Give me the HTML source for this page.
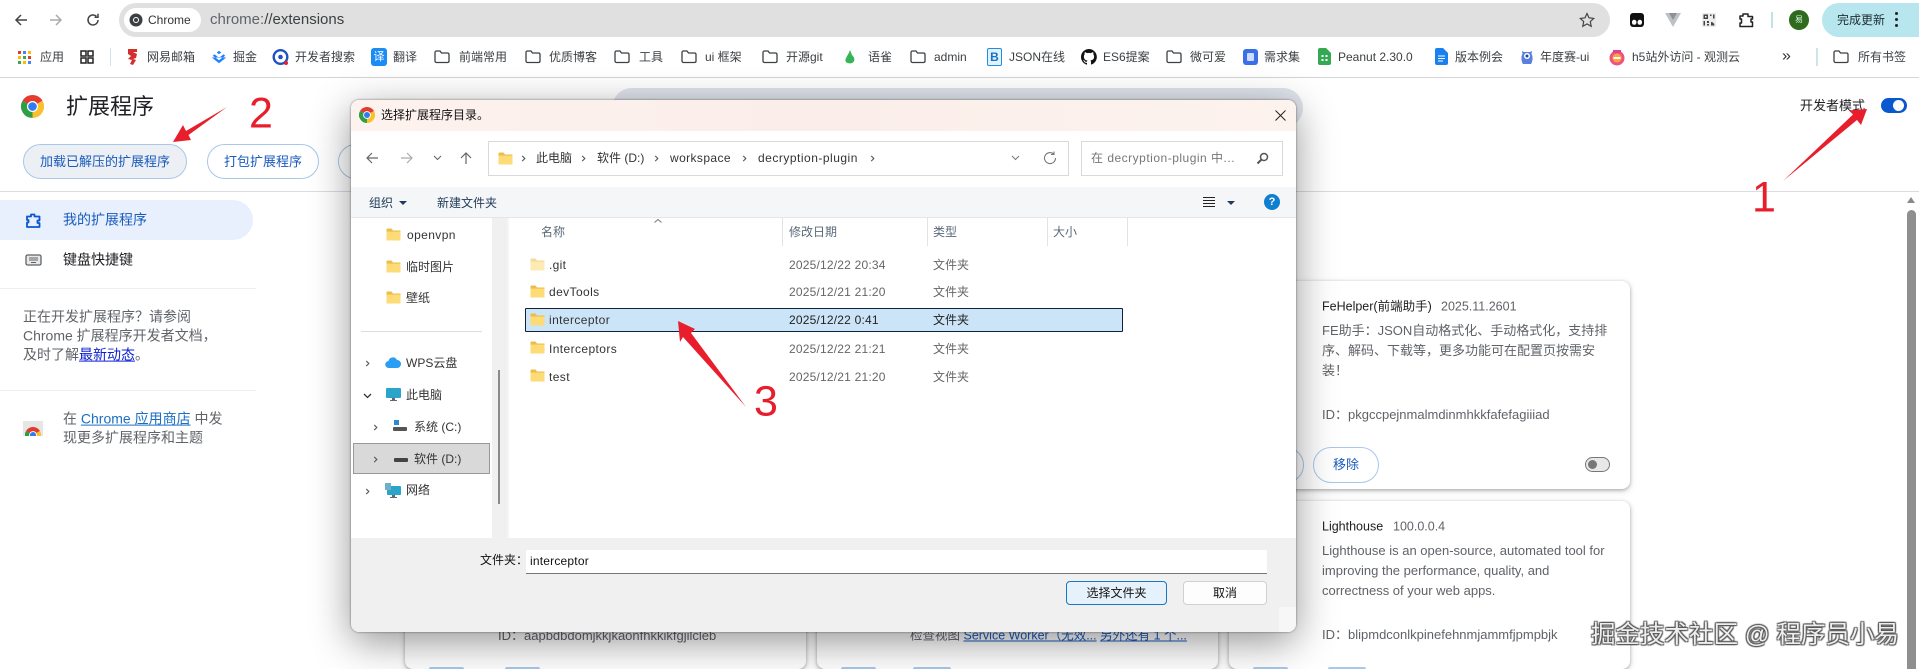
<!DOCTYPE html>
<html lang="zh-CN"><head><meta charset="utf-8"><title>扩展程序</title>
<style>
html,body{margin:0;padding:0;width:1919px;height:669px;overflow:hidden;background:#fff}
body{position:relative;font-family:"Liberation Sans","Noto Sans CJK SC",sans-serif;color:#3c4043}
.t{position:absolute;white-space:nowrap;line-height:1.2;transform:translateY(-50%)}
.a{position:absolute}
svg{display:block}
.i{position:absolute;overflow:visible}
.bm{font-size:12px;color:#3c4043}
.card{position:absolute;background:#fff;border-radius:8px;box-shadow:0 1px 3px rgba(60,64,67,.35),0 2px 7px rgba(60,64,67,.2)}
.pb{position:absolute;border:1px solid #a8c7ea;border-radius:18px;background:#fff;color:#1a5bbd;font-size:13px;box-sizing:border-box;text-align:center;line-height:33px}
.pe{position:absolute;top:667px;height:2px;background:#a8c7ea;border-radius:2px 2px 0 0}
.d12{font-size:12px;color:#333}
.gr{color:#5f6368}
.cd{font-size:13px;color:#5f6368}
.cn{font-size:12.5px;color:#202124}
.num{position:absolute;font-family:"Liberation Sans",sans-serif;color:#e81e2d;font-size:43px;line-height:1;transform:translateY(-50%)}
</style></head><body>
<svg width="0" height="0" style="position:absolute"><defs>
<symbol id="chrome" viewBox="0 0 24 24"><path d="M12 12L1.6 6A12 12 0 0 1 22.4 6Z" fill="#e33b2e"/><path d="M12 12L22.4 6A12 12 0 0 1 12 24Z" fill="#fbc02d"/><path d="M12 12L12 24A12 12 0 0 1 1.6 6Z" fill="#2f9e44"/><circle cx="12" cy="12" r="5.8" fill="#fff"/><circle cx="12" cy="12" r="4.5" fill="#2f7cf0"/></symbol>
<symbol id="fold" viewBox="0 0 14 13"><path d="M0 1.500C0 .8.500.5 1 .5h4l1.500 2H14V12H0Z" fill="#eebc48"/><path d="M0 3.600h14V12.500H0Z" fill="#fddb76"/></symbol>
<symbol id="bf" viewBox="0 0 16 14"><path d="M1 2.500C1 1.600 1.600 1 2.500 1h3.500l1.500 2h6c.9 0 1.500.6 1.500 1.500v6.500c0 .9-.6 1.500-1.500 1.500h-11c-.9 0-1.500-.6-1.500-1.500Z" fill="none" stroke="#3c4043" stroke-width="1.300"/></symbol>
<symbol id="chev" viewBox="0 0 8 10"><path d="M2.500 2l3 3-3 3" fill="none" stroke="#555" stroke-width="1.300"/></symbol>
</defs></svg>

<!-- page content under dialog -->
<div class="a" style="left:612px;top:88px;width:691px;height:40px;border-radius:20px;background:#dfe3eb"></div>
<div class="a" style="left:0;top:191px;width:1919px;height:1px;background:#dadce0"></div>
<svg class="i" style="left:21px;top:95px" width="23" height="23"><use href="#chrome"/></svg>
<div class="t" style="left:66px;top:107px;font-size:22px;color:#202124">扩展程序</div>
<div class="pb" style="left:23px;top:144px;width:164px;height:35px;background:#eceff3">加载已解压的扩展程序</div>
<div class="pb" style="left:207px;top:144px;width:112px;height:35px">打包扩展程序</div>
<div class="pb" style="left:338px;top:144px;width:112px;height:35px"></div>
<div class="t" style="left:1800px;top:106px;font-size:13px;color:#202124">开发者模式</div>
<div class="a" style="left:1881px;top:98px;width:26px;height:15px;border-radius:8px;background:#0b57d0"></div>
<div class="a" style="left:1893px;top:100px;width:11px;height:11px;border-radius:50%;background:#fff"></div>

<div class="a" style="left:0;top:200px;width:253px;height:40px;border-radius:0 20px 20px 0;background:#e8f0fe"></div>
<svg class="i" style="left:25px;top:212px" width="17" height="17" viewBox="0 0 17 17"><path d="M6 2.500h3.500v2h5v4h-2v2.500h2v4H2v-4.500h1.500V8H2V4.500h4Z" fill="none" stroke="#0b57d0" stroke-width="1.800" stroke-linejoin="round"/></svg>
<div class="t" style="left:63px;top:220px;font-size:14px;color:#1a5bbd">我的扩展程序</div>
<svg class="i" style="left:25px;top:253px" width="17" height="14" viewBox="0 0 17 14"><rect x="1" y="2" width="15" height="10" rx="1.500" fill="#e8e8e8" stroke="#5f6368" stroke-width="1.300"/><path d="M4 5h9M4 7h9M6 9.500h5" stroke="#5f6368"/></svg>
<div class="t" style="left:63px;top:260px;font-size:14px;color:#202124">键盘快捷键</div>
<div class="a" style="left:0;top:288px;width:256px;height:1px;background:#eceef0"></div>
<div class="t gr" style="left:23px;top:317px;font-size:14px">正在开发扩展程序&#xFF1F;请参阅</div>
<div class="t gr" style="left:23px;top:336px;font-size:14px">Chrome 扩展程序开发者文档&#xFF0C;</div>
<div class="t gr" style="left:23px;top:355px;font-size:14px">及时了解<span style="color:#0b1fd0;text-decoration:underline">最新动态</span>。</div>
<div class="a" style="left:0;top:390px;width:256px;height:1px;background:#eceef0"></div>
<div class="a" style="left:23px;top:421px;width:20px;height:15px;background:#e6e6e6;overflow:hidden"><svg class="i" style="left:2px;top:6px;clip-path:inset(0 0 7px 0)" width="16" height="16"><use href="#chrome"/></svg></div>
<div class="t gr" style="left:63px;top:419px;font-size:14px">在 <span style="color:#1a6fc4;text-decoration:underline">Chrome 应用商店</span> 中发</div>
<div class="t gr" style="left:63px;top:438px;font-size:14px">现更多扩展程序和主题</div>

<!-- cards -->
<div class="card" style="left:1229px;top:281px;width:401px;height:208px"></div>
<div class="card" style="left:1229px;top:501px;width:401px;height:168px"></div>
<div class="card" style="left:405px;top:501px;width:401px;height:168px"></div>
<div class="card" style="left:817px;top:501px;width:401px;height:168px"></div>

<div class="t cn" style="left:1322px;top:307px">FeHelper(前端助手)</div>
<div class="t cn" style="left:1441px;top:307px;color:#5f6368">2025.11.2601</div>
<div class="t cd" style="left:1322px;top:331px">FE助手&#xFF1A;JSON自动格式化、手动格式化&#xFF0C;支持排</div>
<div class="t cd" style="left:1322px;top:351px">序、解码、下载等&#xFF0C;更多功能可在配置页按需安</div>
<div class="t cd" style="left:1322px;top:371px">装&#xFF01;</div>
<div class="t cd" style="left:1322px;top:415px">ID&#xFF1A;pkgccpejnmalmdinmhkkfafefagiiiad</div>
<div class="pb" style="left:1240px;top:447px;width:64px;height:36px"></div>
<div class="pb" style="left:1313px;top:447px;width:66px;height:36px;line-height:34px;font-size:13px">移除</div>
<div class="a" style="left:1585px;top:457px;width:25px;height:15px;border:1px solid #777;border-radius:8px;background:#e8e8e8;box-sizing:border-box"></div>
<div class="a" style="left:1588px;top:460px;width:9px;height:9px;border-radius:50%;background:#777"></div>

<div class="t cn" style="left:1322px;top:527px">Lighthouse</div>
<div class="t cn" style="left:1393px;top:527px;color:#5f6368">100.0.0.4</div>
<div class="t cd" style="left:1322px;top:551px">Lighthouse is an open-source, automated tool for</div>
<div class="t cd" style="left:1322px;top:571px">improving the performance, quality, and</div>
<div class="t cd" style="left:1322px;top:591px">correctness of your web apps.</div>
<div class="t cd" style="left:1322px;top:635px">ID&#xFF1A;blipmdconlkpinefehnmjammfjpmpbjk</div>
<div class="t cd" style="left:498px;top:636px">ID&#xFF1A;aapbdbdomjkkjkaonfhkkikfgjilcleb</div>
<div class="t cd" style="left:910px;top:636px;font-size:12.5px">检查视图 <span style="color:#1a5bbd;text-decoration:underline">Service Worker&#xFF08;无效...</span> <span style="color:#1a5bbd;text-decoration:underline">另外还有 1 个...</span></div>
<div class="pe" style="left:429px;width:35px"></div>
<div class="pe" style="left:505px;width:35px"></div>
<div class="pe" style="left:841px;width:35px"></div>
<div class="pe" style="left:913px;width:38px"></div>
<div class="pe" style="left:1253px;width:35px"></div>
<div class="pe" style="left:1328px;width:38px"></div>

<!-- scrollbar -->
<div class="a" style="left:1907px;top:197px;width:0;height:0;border-left:4.500px solid transparent;border-right:4.500px solid transparent;border-bottom:6px solid #8a8a8a"></div>
<div class="a" style="left:1907px;top:210px;width:9px;height:459px;border-radius:5px 5px 0 0;background:#8f8f8f"></div>

<!-- top chrome -->
<div class="a" style="left:0;top:0;width:1919px;height:77px;background:#fff;border-bottom:1px solid #d4d4d4"></div>
<svg class="i" style="left:13px;top:12px" width="16" height="16" viewBox="0 0 16 16"><path d="M14 8H3M8 3L3 8l5 5" fill="none" stroke="#444" stroke-width="1.500"/></svg>
<svg class="i" style="left:48px;top:12px" width="16" height="16" viewBox="0 0 16 16"><path d="M2 8h11M8 3l5 5-5 5" fill="none" stroke="#aaa" stroke-width="1.500"/></svg>
<svg class="i" style="left:85px;top:12px" width="16" height="16" viewBox="0 0 16 16"><path d="M13 8a5 5 0 1 1-1.600-3.700M13 1.800v3.400H9.600" fill="none" stroke="#444" stroke-width="1.500"/></svg>
<div class="a" style="left:119px;top:3px;width:1491px;height:34px;border-radius:17px;background:#e0e0e0"></div>
<div class="a" style="left:124px;top:8px;width:77px;height:24px;border-radius:12px;background:#fff"></div>
<svg class="i" style="left:129px;top:13px" width="14" height="14" viewBox="0 0 14 14"><circle cx="7" cy="7" r="6.500" fill="#3c4043"/><circle cx="7" cy="7" r="3" fill="#fff"/><circle cx="7" cy="7" r="2" fill="#3c4043"/></svg>
<div class="t" style="left:148px;top:20px;font-size:12px;color:#333">Chrome</div>
<div class="t" style="left:210px;top:20px;font-size:15px;color:#5f6368">chrome:<span style="color:#3c4043">//extensions</span></div>
<svg class="i" style="left:1579px;top:12px" width="16" height="16" viewBox="0 0 16 16"><path d="M8 1.500l2 4.300 4.700.6-3.400 3.200.9 4.700L8 11.900l-4.200 2.400.9-4.700L1.300 6.400 6 5.800Z" fill="none" stroke="#444" stroke-width="1.200"/></svg>
<svg class="i" style="left:1630px;top:13px" width="14" height="14" viewBox="0 0 14 14"><path d="M3 0h8a3 3 0 0 1 3 3v8a3 3 0 0 1-3 3H3a3 3 0 0 1-3-3V3a3 3 0 0 1 3-3Z" fill="#111"/><ellipse cx="4.200" cy="9.300" rx="2.300" ry="2.500" fill="#fff"/><ellipse cx="9.800" cy="9.300" rx="2.300" ry="2.500" fill="#fff"/></svg>
<svg class="i" style="left:1665px;top:13px" width="16" height="14" viewBox="0 0 16 14"><path d="M0 0h16L8 14Z" fill="#bfc2c4"/><path d="M4 0h8L8 7Z" fill="#8d9195"/></svg>
<svg class="i" style="left:1702px;top:13px" width="14" height="14" viewBox="0 0 14 14"><rect width="14" height="14" fill="#ececec"/><path d="M1.500 1.500h4.500v4.500H1.500ZM8 1.500h1.500V3H8ZM11 1.500h1.500v4H11ZM1.500 8H3v4.500H1.500Z" fill="#444"/><path d="M3 3h1.500v1.500H3Z" fill="#fff"/><path d="M5 8h2v2H5ZM5 11h2v1.500H5ZM9 9a3.500 3.500 0 0 1 3.500 3.500H9Z" fill="#444"/></svg>
<svg class="i" style="left:1738px;top:12px" width="17" height="16" viewBox="0 0 17 16"><path d="M5 2h5v2.500h4.500V7H13v3h1.500v4.500H2V11h1.500V7H2V4h3Z" fill="none" stroke="#222" stroke-width="1.500" stroke-linejoin="round"/></svg>
<div class="a" style="left:1771px;top:12px;width:2px;height:16px;background:#bfe2e8"></div>
<div class="a" style="left:1789px;top:10px;width:20px;height:20px;border-radius:50%;background:#2f6a1d"></div>
<div class="t" style="left:1795px;top:20px;font-size:8px;color:#dfe">易</div>
<div class="a" style="left:1822px;top:3px;width:97px;height:34px;border-radius:17px 0 0 17px;background:#b7e6ee"></div>
<div class="t" style="left:1837px;top:20px;font-size:12px;color:#1f2d33">完成更新</div>
<div class="a" style="left:1895px;top:12px;width:3px;height:3px;border-radius:50%;background:#222;box-shadow:0 6px 0 #222,0 12px 0 #222"></div>

<!-- bookmarks -->
<svg class="i" style="left:17px;top:50px" width="15" height="14" viewBox="0 0 15 14"><path d="M1 1h3v3H1Z" fill="#e33b2e"/><path d="M6 1h3v3H6Z" fill="#4285f4"/><path d="M11 1h3v3h-3Z" fill="#fbbc05"/><path d="M1 6h3v3H1Z" fill="#fbbc05"/><path d="M6 6h3v3H6Z" fill="#34a853"/><path d="M11 6h3v3h-3Z" fill="#e33b2e"/><path d="M1 11h3v3H1Z" fill="#34a853"/><path d="M6 11h3v3H6Z" fill="#fbbc05"/><path d="M11 11h3v3h-3Z" fill="#4285f4"/></svg>
<div class="t bm" style="left:40px;top:57px">应用</div>
<svg class="i" style="left:80px;top:50px" width="14" height="14" viewBox="0 0 14 14"><path d="M1 1h5v5H1ZM8 1h5v5H8ZM1 8h5v5H1ZM8 8h5v5H8Z" fill="none" stroke="#222" stroke-width="1.500"/></svg>
<div class="a" style="left:110px;top:48px;width:1px;height:18px;background:#cfe3ea"></div>
<svg class="i" style="left:126px;top:48px" width="13" height="18" viewBox="0 0 13 18"><path d="M2 1h9v3H7l4 2-1 4-3 1 3 1-3 5-3-1 2-4-4-1 3-3-3-2Z" fill="#d32f2f"/></svg>
<div class="t bm" style="left:147px;top:57px">网易邮箱</div>
<svg class="i" style="left:211px;top:50px" width="16" height="14" viewBox="0 0 16 14"><path d="M8 1l2 1.500L8 4 6 2.500ZM3.500 4.500L8 8l4.500-3.500 1.500 1.200L8 10.500 2 5.700ZM1 7.500L8 13l7-5.500" fill="#1e80ff" stroke="#1e80ff" stroke-width=".4"/></svg>
<div class="t bm" style="left:233px;top:57px">掘金</div>
<svg class="i" style="left:272px;top:48px" width="17" height="18" viewBox="0 0 17 18"><circle cx="8.500" cy="9" r="6.800" fill="none" stroke="#1d52c4" stroke-width="2.400"/><circle cx="8.500" cy="9" r="2.300" fill="#1d52c4"/><circle cx="14" cy="15" r="2" fill="#e3222e"/></svg>
<div class="t bm" style="left:295px;top:57px">开发者搜索</div>
<div class="a" style="left:371px;top:48px;width:16px;height:18px;border-radius:3px;background:#1b8bf5;color:#fff;font-size:11px;line-height:18px;text-align:center">译</div>
<div class="t bm" style="left:393px;top:57px">翻译</div>
<svg class="i" style="left:434px;top:50px" width="16" height="14"><use href="#bf"/></svg><div class="t bm" style="left:459px;top:57px">前端常用</div>
<svg class="i" style="left:525px;top:50px" width="16" height="14"><use href="#bf"/></svg><div class="t bm" style="left:549px;top:57px">优质博客</div>
<svg class="i" style="left:614px;top:50px" width="16" height="14"><use href="#bf"/></svg><div class="t bm" style="left:639px;top:57px">工具</div>
<svg class="i" style="left:681px;top:50px" width="16" height="14"><use href="#bf"/></svg><div class="t bm" style="left:705px;top:57px">ui 框架</div>
<svg class="i" style="left:762px;top:50px" width="16" height="14"><use href="#bf"/></svg><div class="t bm" style="left:786px;top:57px">开源git</div>
<svg class="i" style="left:844px;top:49px" width="12" height="16" viewBox="0 0 12 16"><path d="M6 1c1 2 1 3 2 5 2 2 3 4 2 6-1 3-6 3-8 1C0 10 4 7 6 1Z" fill="#35b558"/></svg>
<div class="t bm" style="left:868px;top:57px">语雀</div>
<svg class="i" style="left:910px;top:50px" width="16" height="14"><use href="#bf"/></svg><div class="t bm" style="left:934px;top:57px">admin</div>
<div class="a" style="left:987px;top:48px;width:15px;height:18px;border-radius:2px;background:#e2f1fb;border:1px solid #1d8fe0;box-sizing:border-box;color:#1273c4;font-size:12px;font-weight:bold;line-height:16px;text-align:center">B</div>
<div class="t bm" style="left:1009px;top:57px">JSON在线</div>
<svg class="i" style="left:1081px;top:49px" width="16" height="16" viewBox="0 0 16 16"><path d="M8 0a8 8 0 0 0-2.500 15.600c.4.1.5-.2.5-.4v-1.400c-2.200.5-2.700-1-2.700-1-.4-.9-.9-1.200-.9-1.200-.7-.5.100-.5.100-.5.800.1 1.200.8 1.200.8.700 1.200 1.900.9 2.300.7.100-.5.300-.9.500-1.100-1.800-.2-3.600-.9-3.600-4 0-.9.300-1.600.8-2.100-.1-.2-.4-1 .1-2.100 0 0 .7-.2 2.200.8a7.500 7.500 0 0 1 4 0c1.500-1 2.200-.8 2.200-.8.400 1.100.2 1.900.1 2.100.5.600.8 1.300.8 2.100 0 3.100-1.900 3.700-3.700 3.900.3.300.6.700.6 1.500v2.200c0 .2.100.5.600.4A8 8 0 0 0 8 0Z" fill="#111"/></svg>
<div class="t bm" style="left:1103px;top:57px">ES6提案</div>
<svg class="i" style="left:1166px;top:50px" width="16" height="14"><use href="#bf"/></svg><div class="t bm" style="left:1190px;top:57px">微可爱</div>
<div class="a" style="left:1243px;top:49px;width:15px;height:16px;border-radius:3px;background:#3b6fe8"><div class="a" style="left:4px;top:4px;width:7px;height:8px;background:#cfdcff;border-radius:1px"></div></div>
<div class="t bm" style="left:1264px;top:57px">需求集</div>
<svg class="i" style="left:1318px;top:48px" width="13" height="17" viewBox="0 0 13 17"><path d="M2 0h6l5 5v10a2 2 0 0 1-2 2H2a2 2 0 0 1-2-2V2a2 2 0 0 1 2-2Z" fill="#34a853"/><path d="M3.500 7h2v2h-2ZM7.500 7h2v2h-2ZM3.500 11h2v2h-2ZM7.500 11h2v2h-2Z" fill="#fff"/></svg>
<div class="t bm" style="left:1338px;top:57px">Peanut 2.30.0</div>
<svg class="i" style="left:1435px;top:48px" width="13" height="17" viewBox="0 0 13 17"><path d="M2 0h6l5 5v10a2 2 0 0 1-2 2H2a2 2 0 0 1-2-2V2a2 2 0 0 1 2-2Z" fill="#1a80f0"/><path d="M3 8h7M3 10.500h7M3 13h5" stroke="#fff"/></svg>
<div class="t bm" style="left:1455px;top:57px">版本例会</div>
<svg class="i" style="left:1520px;top:48px" width="14" height="18" viewBox="0 0 14 18"><path d="M2 3l2 1h6l2-1-.5 3C13 8 13 13 11 16H3C1 13 1 8 2.500 6Z" fill="#5b7fe0"/><circle cx="7" cy="8" r="3" fill="#fff"/><circle cx="7" cy="8" r="1.500" fill="#27408b"/></svg>
<div class="t bm" style="left:1540px;top:57px">年度赛-ui</div>
<svg class="i" style="left:1609px;top:48px" width="16" height="18" viewBox="0 0 16 18"><circle cx="8" cy="10" r="7.500" fill="#f0527f"/><circle cx="8" cy="10" r="4.500" fill="#fba63c"/><path d="M4 2h8v3H4Z" fill="#e0418f"/><path d="M4.500 9h7v2h-7Z" fill="#fff"/></svg>
<div class="t bm" style="left:1632px;top:57px">h5站外访问 - 观测云</div>
<div class="t" style="left:1782px;top:56px;font-size:16px;color:#333">»</div>
<div class="a" style="left:1816px;top:48px;width:2px;height:18px;background:#cfe3ea"></div>
<svg class="i" style="left:1833px;top:50px" width="16" height="14"><use href="#bf"/></svg><div class="t bm" style="left:1858px;top:57px">所有书签</div>

<!-- dialog -->
<div class="a" style="left:351px;top:100px;width:945px;height:532px;border-radius:8px;background:#fff;box-shadow:0 10px 40px rgba(0,0,0,.42),0 0 2px rgba(0,0,0,.5);overflow:hidden">
 <div class="a" style="left:0;top:0;width:945px;height:31px;background:linear-gradient(90deg,#fdf2ee,#fbeeea 50%,#fdf3ee)"></div>
 <div class="a" style="left:0;top:87px;width:945px;height:31px;background:#f5f6f7;border-bottom:1px solid #e6e6e6;box-sizing:border-box"></div>
 <div class="a" style="left:141px;top:118px;width:15px;height:320px;background:#f0f0f0"></div>
 <div class="a" style="left:147px;top:270px;width:2px;height:134px;background:#8a8a8a"></div>
 <div class="a" style="left:156px;top:118px;width:2px;height:320px;background:#f5f5f5"></div>
 <div class="a" style="left:0;top:438px;width:945px;height:94px;background:#f0f0f0"></div>
 <div class="a" style="left:928px;top:507px;width:17px;height:25px;background:#f7f7f7"></div>
</div>
<svg class="i" style="left:359px;top:107px" width="16" height="16"><use href="#chrome"/></svg>
<div class="t" style="left:381px;top:115px;font-size:12px;color:#111">选择扩展程序目录。</div>
<svg class="i" style="left:1275px;top:110px" width="11" height="11" viewBox="0 0 11 11"><path d="M.5.500l10 10M10.500.500l-10 10" stroke="#222" stroke-width="1"/></svg>
<svg class="i" style="left:365px;top:151px" width="14" height="14" viewBox="0 0 14 14"><path d="M13 7H2M7 2L2 7l5 5" fill="none" stroke="#666" stroke-width="1.200"/></svg>
<svg class="i" style="left:400px;top:151px" width="14" height="14" viewBox="0 0 14 14"><path d="M1 7h11M7 2l5 5-5 5" fill="none" stroke="#aaa" stroke-width="1.200"/></svg>
<svg class="i" style="left:433px;top:155px" width="9" height="6" viewBox="0 0 9 6"><path d="M1 1l3.500 3.500L8 1" fill="none" stroke="#666" stroke-width="1.100"/></svg>
<svg class="i" style="left:459px;top:151px" width="14" height="14" viewBox="0 0 14 14"><path d="M7 13V2M2 7l5-5 5 5" fill="none" stroke="#666" stroke-width="1.200"/></svg>
<div class="a" style="left:488px;top:141px;width:581px;height:35px;border:1px solid #d9d9d9;box-sizing:border-box"></div>
<svg class="i" style="left:498px;top:152px" width="15" height="13"><use href="#fold"/></svg>
<svg class="i" style="left:520px;top:154px" width="7" height="9"><use href="#chev"/></svg>
<div class="t d12" style="left:536px;top:158px">此电脑</div>
<svg class="i" style="left:580px;top:154px" width="7" height="9"><use href="#chev"/></svg>
<div class="t d12" style="left:597px;top:158px">软件 (D:)</div>
<svg class="i" style="left:653px;top:154px" width="7" height="9"><use href="#chev"/></svg>
<div class="t d12" style="left:670px;top:158px;letter-spacing:.4px">workspace</div>
<svg class="i" style="left:741px;top:154px" width="7" height="9"><use href="#chev"/></svg>
<div class="t d12" style="left:758px;top:158px;letter-spacing:.5px">decryption-plugin</div>
<svg class="i" style="left:869px;top:154px" width="7" height="9"><use href="#chev"/></svg>
<svg class="i" style="left:1011px;top:155px" width="9" height="6" viewBox="0 0 9 6"><path d="M1 1l3.500 3.500L8 1" fill="none" stroke="#777" stroke-width="1"/></svg>
<svg class="i" style="left:1043px;top:151px" width="14" height="14" viewBox="0 0 14 14"><path d="M12.500 7a5.500 5.500 0 1 1-1.800-4M11 .5v3H8" fill="none" stroke="#777" stroke-width="1.100"/></svg>
<div class="a" style="left:1081px;top:141px;width:202px;height:35px;border:1px solid #d9d9d9;box-sizing:border-box"></div>
<div class="t" style="left:1091px;top:158px;font-size:12px;color:#777;letter-spacing:.5px">在 decryption-plugin 中...</div>
<svg class="i" style="left:1256px;top:152px" width="13" height="13" viewBox="0 0 13 13"><circle cx="8" cy="5" r="3.500" fill="none" stroke="#555" stroke-width="1.500"/><path d="M5.500 7.500L1.500 11.500" stroke="#555" stroke-width="2"/></svg>

<div class="t d12" style="left:369px;top:203px;color:#1f3a5a">组织</div>
<div class="a" style="left:399px;top:201px;width:0;height:0;border-left:4px solid transparent;border-right:4px solid transparent;border-top:4px solid #1f3a5a"></div>
<div class="t d12" style="left:437px;top:203px;color:#1f3a5a">新建文件夹</div>
<svg class="i" style="left:1203px;top:197px" width="12" height="11" viewBox="0 0 12 11"><path d="M0 .5h12M0 3.500h12M0 6.500h12M0 9.500h12" stroke="#222"/></svg>
<div class="a" style="left:1227px;top:201px;width:0;height:0;border-left:4px solid transparent;border-right:4px solid transparent;border-top:4px solid #1f3a5a"></div>
<div class="a" style="left:1264px;top:194px;width:16px;height:16px;border-radius:50%;background:#0f7fd0;color:#fff;font-size:11px;font-weight:bold;line-height:16px;text-align:center">?</div>

<!-- tree -->
<svg class="i" style="left:386px;top:228px" width="15" height="13"><use href="#fold"/></svg>
<div class="t d12" style="left:407px;top:235px;letter-spacing:.4px">openvpn</div>
<svg class="i" style="left:386px;top:260px" width="15" height="13"><use href="#fold"/></svg>
<div class="t d12" style="left:406px;top:267px">临时图片</div>
<svg class="i" style="left:386px;top:291px" width="15" height="13"><use href="#fold"/></svg>
<div class="t d12" style="left:406px;top:298px">壁纸</div>
<div class="a" style="left:361px;top:331px;width:121px;height:1px;background:#ddd"></div>
<svg class="i" style="left:364px;top:359px" width="7" height="9"><use href="#chev"/></svg>
<svg class="i" style="left:385px;top:356px" width="16" height="13" viewBox="0 0 16 13"><path d="M4 12a3.500 3.500 0 0 1-.5-7A4.500 4.500 0 0 1 12 4a4 4 0 0 1 0 8Z" fill="#2a9df4"/></svg>
<div class="t d12" style="left:406px;top:363px">WPS云盘</div>
<svg class="i" style="left:363px;top:393px" width="9" height="6" viewBox="0 0 9 6"><path d="M1 1l3.500 3.500L8 1" fill="none" stroke="#333" stroke-width="1.300"/></svg>
<svg class="i" style="left:386px;top:388px" width="15" height="14" viewBox="0 0 15 14"><rect width="15" height="10" rx="1" fill="#2aa5c9"/><path d="M6 10h3v2h2v1H4v-1h2Z" fill="#667"/></svg>
<div class="t d12" style="left:406px;top:395px">此电脑</div>
<svg class="i" style="left:372px;top:423px" width="7" height="9"><use href="#chev"/></svg>
<svg class="i" style="left:393px;top:420px" width="15" height="12" viewBox="0 0 15 12"><path d="M1 0h5v5H1Z" fill="#2a8ad4"/><rect y="7" width="14" height="4" rx="1" fill="#555"/></svg>
<div class="t d12" style="left:414px;top:427px">系统 (C:)</div>
<div class="a" style="left:353px;top:443px;width:137px;height:31px;background:#d9d9d9;border:1px solid #999;box-sizing:border-box"></div>
<svg class="i" style="left:372px;top:455px" width="7" height="9"><use href="#chev"/></svg>
<div class="a" style="left:394px;top:458px;width:14px;height:4px;background:#444;border-radius:1px"></div>
<div class="t d12" style="left:414px;top:459px">软件 (D:)</div>
<svg class="i" style="left:364px;top:487px" width="7" height="9"><use href="#chev"/></svg>
<svg class="i" style="left:385px;top:483px" width="16" height="15" viewBox="0 0 16 15"><rect x="2" y="3" width="14" height="9" rx="1" fill="#2aa5c9"/><rect x="0" y="0" width="6" height="7" fill="#6fb0c9"/><path d="M7 12h3v2h2v1H5v-1h2Z" fill="#667"/></svg>
<div class="t d12" style="left:406px;top:490px">网络</div>

<!-- list -->
<div class="t d12" style="left:541px;top:232px;color:#5a6a7a">名称</div>
<svg class="i" style="left:654px;top:219px" width="8" height="4" viewBox="0 0 8 4"><path d="M.5 3.500L4 .5l3.500 3" fill="none" stroke="#777"/></svg>
<div class="a" style="left:782px;top:218px;width:1px;height:28px;background:#e3e3e3"></div>
<div class="a" style="left:927px;top:218px;width:1px;height:28px;background:#e3e3e3"></div>
<div class="a" style="left:1047px;top:218px;width:1px;height:28px;background:#e3e3e3"></div>
<div class="a" style="left:1127px;top:218px;width:1px;height:28px;background:#e3e3e3"></div>
<div class="t d12" style="left:789px;top:232px;color:#5a6a7a">修改日期</div>
<div class="t d12" style="left:933px;top:232px;color:#5a6a7a">类型</div>
<div class="t d12" style="left:1053px;top:232px;color:#5a6a7a">大小</div>

<div class="a" style="left:525px;top:308px;width:598px;height:24px;background:#cce4f7;border:1px solid #10233a;border-radius:1px;box-sizing:border-box"></div>
<svg class="i" style="left:530px;top:258px;opacity:.55" width="15" height="13"><use href="#fold"/></svg>
<div class="t d12" style="left:549px;top:265px;letter-spacing:.3px">.git</div>
<svg class="i" style="left:530px;top:285px" width="15" height="13"><use href="#fold"/></svg>
<div class="t d12" style="left:549px;top:292px;letter-spacing:.4px">devTools</div>
<svg class="i" style="left:530px;top:313px" width="15" height="13"><use href="#fold"/></svg>
<div class="t d12" style="left:549px;top:320px;letter-spacing:.4px">interceptor</div>
<svg class="i" style="left:530px;top:341px" width="15" height="13"><use href="#fold"/></svg>
<div class="t d12" style="left:549px;top:349px;letter-spacing:.4px">Interceptors</div>
<svg class="i" style="left:530px;top:369px" width="15" height="13"><use href="#fold"/></svg>
<div class="t d12" style="left:549px;top:377px;letter-spacing:.4px">test</div>

<div class="t d12" style="left:789px;top:265px;color:#666;letter-spacing:.2px">2025/12/22 20:34</div>
<div class="t d12" style="left:789px;top:292px;color:#666;letter-spacing:.2px">2025/12/21 21:20</div>
<div class="t d12" style="left:789px;top:320px;color:#222;letter-spacing:.2px">2025/12/22 0:41</div>
<div class="t d12" style="left:789px;top:349px;color:#666;letter-spacing:.2px">2025/12/22 21:21</div>
<div class="t d12" style="left:789px;top:377px;color:#666;letter-spacing:.2px">2025/12/21 21:20</div>
<div class="t d12" style="left:933px;top:265px;color:#666">文件夹</div>
<div class="t d12" style="left:933px;top:292px;color:#666">文件夹</div>
<div class="t d12" style="left:933px;top:320px;color:#222">文件夹</div>
<div class="t d12" style="left:933px;top:349px;color:#666">文件夹</div>
<div class="t d12" style="left:933px;top:377px;color:#666">文件夹</div>

<!-- bottom -->
<div class="t d12" style="left:480px;top:560px;color:#111">文件夹&#xFF1A;</div>
<div class="a" style="left:526px;top:550px;width:741px;height:24px;background:#fff;border-bottom:1px solid #777;box-sizing:border-box"></div>
<div class="t d12" style="left:530px;top:561px;color:#111;letter-spacing:.2px">interceptor</div>
<div class="a" style="left:1066px;top:581px;width:101px;height:24px;background:#e6f2fb;border:1px solid #1a78c2;border-radius:4px;box-sizing:border-box;font-size:12px;line-height:22px;text-align:center;color:#111">选择文件夹</div>
<div class="a" style="left:1183px;top:581px;width:84px;height:24px;background:#fdfdfd;border:1px solid #d0d0d0;border-radius:4px;box-sizing:border-box;font-size:12px;line-height:22px;text-align:center;color:#111">取消</div>

<!-- annotations -->
<svg class="i" style="left:0;top:0" width="1919" height="669" viewBox="0 0 1919 669">
<path d="M173 142L183 125 186 131 227 107 188.500 135 191 140Z" fill="#e81e2d"/>
<path d="M1867 109L1861 125 1857 120 1783 181 1853 114.500 1849 110.500Z" fill="#e81e2d"/>
<path d="M678 321L695 329 691 333 746 407 683 337 680 342Z" fill="#e81e2d"/>
</svg>
<div class="num" style="left:249px;top:114px">2</div>
<div class="num" style="left:1752px;top:198px">1</div>
<div class="num" style="left:754px;top:402px">3</div>

<!-- watermark -->
<div class="t" style="left:1591px;top:635px;font-size:24.500px;color:#eee;text-shadow:1px 1px 1px #555,-1px -1px 1px #555,1px -1px 1px #555,-1px 1px 1px #555">掘金技术社区 @ 程序员小易</div>
</body></html>
